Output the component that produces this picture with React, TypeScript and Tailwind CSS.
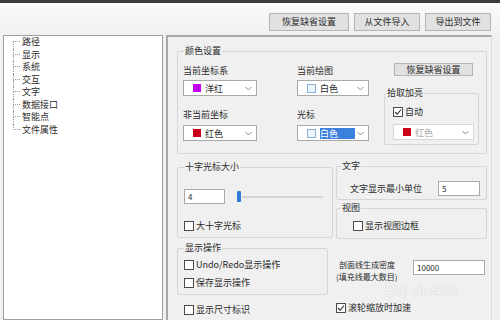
import React from "react";

type SwatchKind = "magenta" | "red" | "white";

function Swatch({ kind }: { kind: SwatchKind }) {
  if (kind === "white") return <span className="w-[9px] h-[9px] border border-[#86b0d6] bg-[#eef6fc]" />;
  if (kind === "magenta") return <span className="w-[8px] h-[8px] bg-[#c400f2]" />;
  return <span className="w-[8px] h-[8px] bg-[#cc0018]" />;
}

function Chevron() {
  return (
    <svg width="7" height="5" viewBox="0 0 7 5" className="ml-auto mr-[4px]">
      <polyline points="0.5,1 3.5,4 6.5,1" fill="none" stroke="#8a8a8a" strokeWidth="1" />
    </svg>
  );
}

function Combo({
  swatch,
  text,
  selected,
  disabled,
  className,
}: {
  swatch: SwatchKind;
  text: string;
  selected?: boolean;
  disabled?: boolean;
  className: string;
}) {
  return (
    <div
      className={`h-[16px] flex items-center bg-white border ${disabled ? "border-[#d6d6d6]" : "border-[#a9a9a9]"} ${className}`}
    >
      <span className="ml-[9px] flex">
        <Swatch kind={swatch} />
      </span>
      <span
        className={`ml-[4px] leading-[11px] ${selected ? "bg-[#3a80dc] text-white pr-[17px]" : ""} ${disabled ? "text-[#a9a9a9]" : ""}`}
      >
        {text}
      </span>
      <Chevron />
    </div>
  );
}

function Check({ label, checked, className = "" }: { label: string; checked?: boolean; className?: string }) {
  return (
    <div className={`h-[12px] flex items-center ${className}`}>
      <span className="w-[10px] h-[10px] border border-[#4a4a4a] bg-white flex items-center justify-center">
        {checked && (
          <svg width="8" height="8" viewBox="0 0 8 8">
            <polyline points="1,4 3.2,6.2 7,1.5" fill="none" stroke="#333" strokeWidth="1.1" />
          </svg>
        )}
      </span>
      <span className="ml-[2px] leading-[12px]">{label}</span>
    </div>
  );
}

function Legend({ children, className = "" }: { children: React.ReactNode; className?: string }) {
  return <legend className={`px-[1px] leading-[12px] ${className}`}>{children}</legend>;
}

function TextBox({ value, className }: { value: string; className: string }) {
  return (
    <div className={`h-[15px] border border-[#a9a9a9] bg-white pl-[3px] text-[8px] leading-[13px] ${className}`}>
      {value}
    </div>
  );
}

const treeItems = ["路径", "显示", "系统", "交互", "文字", "数据接口", "智能点", "文件属性"];

export default function App() {
  return (
    <div className="w-[500px] h-[320px] overflow-hidden bg-[#f0f0f0] text-[9px] text-[#2a2a2a] font-['Noto_Sans_CJK_SC',sans-serif] relative">
      {/* window strip above the dialog */}
      <div className="h-[3px] bg-[#3c3c3c]" />
      <div className="h-[32px] flex justify-end items-start pt-[10px] pr-[9px] gap-[5px] bg-gradient-to-b from-[#fbfbfb] to-[#f0f0f0]">
        <button className="w-[80px] h-[18px] bg-[#e1e1e1] border border-[#b4b4b4] leading-[16px]">恢复缺省设置</button>
        <button className="w-[66px] h-[18px] bg-[#e1e1e1] border border-[#b4b4b4] leading-[16px]">从文件导入</button>
        <button className="w-[66px] h-[18px] bg-[#e1e1e1] border border-[#b4b4b4] leading-[16px]">导出到文件</button>
      </div>

      <div className="flex pl-[3px] gap-[3px] h-[285px]">
        {/* tree */}
        <div className="w-[160px] h-full bg-white border border-[#a0a0a0]">
          {treeItems.map((t, i) => (
            <div key={t} className="flex h-[12.5px]">
              <div className="ml-[9px] w-[7px] flex flex-col">
                <div
                  className={`h-1/2 border-b border-dotted border-[#9a9a9a] ${i === 0 ? "" : "border-l"}`}
                />
                <div
                  className={`h-1/2 border-dotted border-[#9a9a9a] ${i === treeItems.length - 1 ? "" : "border-l"}`}
                />
              </div>
              <span className="ml-[2px] leading-[12.5px]">{t}</span>
            </div>
          ))}
        </div>

        {/* settings panel */}
        <div className="w-[326px] h-full border-l-2 border-t-2 border-r border-[#a8a8a8] border-r-[#dcdcdc] pl-[9px] pt-[8px]">
          <fieldset className="w-[310px] border border-[#d6d6d6] rounded-[2px] flex">
            <Legend className="ml-[6px]">颜色设置</Legend>
            <div className="flex items-start">
              <div className="ml-[5px] w-[74px] flex flex-col">
                <div className="mt-[8px] leading-[12px]">当前坐标系</div>
                <Combo className="mt-[3px] w-[74px]" swatch="magenta" text="洋红" />
                <div className="mt-[13px] leading-[12px]">非当前坐标</div>
                <Combo className="mt-[4px] w-[74px]" swatch="red" text="红色" />
                <div className="h-[12px]" />
              </div>
              <div className="ml-[40px] w-[72px] flex flex-col">
                <div className="mt-[8px] leading-[12px]">当前绘图</div>
                <Combo className="mt-[3px] w-[72px]" swatch="white" text="白色" />
                <div className="mt-[13px] leading-[12px]">光标</div>
                <Combo className="mt-[4px] w-[72px]" swatch="white" text="白色" selected />
              </div>
              <div className="ml-[15px] w-[95px] flex flex-col">
                <button className="mt-[6px] ml-[10px] w-[79px] h-[13px] bg-[#e1e1e1] border border-[#b4b4b4] leading-[11px]">
                  恢复缺省设置
                </button>
                <fieldset className="mt-[11px] w-[95px] border border-[#d6d6d6] rounded-[2px]">
                  <Legend className="ml-[1px]">拾取加亮</Legend>
                  <Check className="mt-[7px] ml-[8px]" label="自动" checked />
                  <Combo className="mt-[6px] ml-[8px] w-[81px]" swatch="red" text="红色" disabled />
                  <div className="h-[4px]" />
                </fieldset>
              </div>
            </div>
          </fieldset>

          <div className="flex gap-[3px]">
            <div className="w-[156px] flex flex-col">
              <fieldset className="mt-[7px] w-[156px] border border-[#d6d6d6] rounded-[2px]">
                <Legend className="ml-[6px]">十字光标大小</Legend>
                <div className="mt-[16px] flex items-center">
                  <TextBox className="ml-[6px] w-[41px]" value="4" />
                  <span className="ml-[12px] w-[4px] h-[11px] bg-[#2f7bd8] rounded-[1px]" />
                  <span className="ml-[1px] w-[81px] h-[2px] bg-[#d4d4d4]" />
                </div>
                <Check className="mt-[16px] ml-[6px]" label="大十字光标" />
                <div className="h-[5px]" />
              </fieldset>
              <fieldset className="mt-[4px] w-[151px] border border-[#d6d6d6] rounded-[2px]">
                <Legend className="ml-[6px]">显示操作</Legend>
                <Check className="mt-[5px] ml-[6px]" label="Undo/Redo显示操作" />
                <Check className="mt-[6px] ml-[6px]" label="保存显示操作" />
                <div className="h-[5px]" />
              </fieldset>
              <Check className="mt-[9px] ml-[7px]" label="显示尺寸标识" />
            </div>

            <div className="w-[151px] flex flex-col">
              <fieldset className="mt-[6px] w-[151px] border border-[#d6d6d6] rounded-[2px]">
                <Legend className="ml-[4px]">文字</Legend>
                <div className="mt-[9px] flex items-center">
                  <span className="ml-[13px] w-[88px] leading-[12px]">文字显示最小单位</span>
                  <TextBox className="w-[42px]" value="5" />
                </div>
                <div className="h-[3px]" />
              </fieldset>
              <fieldset className="mt-[2px] w-[151px] border border-[#d6d6d6] rounded-[2px]">
                <Legend className="ml-[4px]">视图</Legend>
                <Check className="mt-[6px] ml-[16px]" label="显示视图边框" />
                <div className="h-[6px]" />
              </fieldset>
              <div className="mt-[20px] flex items-start">
                <div className="ml-[3px] w-[74px] text-[8px] leading-[11.6px]">
                  <div>剖面线生成密度</div>
                  <div className="-ml-[3px]">(填充线最大数目)</div>
                </div>
                <TextBox className="mt-[1px] w-[72px]" value="10000" />
              </div>
              <Check className="mt-[20px]" label="滚轮缩放时加速" checked />
            </div>
          </div>
        </div>
      </div>

      {/* watermark */}
      <div className="absolute left-[385px] top-[282px] text-[16px] leading-[16px] text-[#f6f6f6] font-['Liberation_Sans',sans-serif] [text-shadow:0_0_1px_#c4c4c4]">
        Bai du<span className="text-[14px] font-['Noto_Sans_CJK_SC',sans-serif]">经验</span>
      </div>
    </div>
  );
}
